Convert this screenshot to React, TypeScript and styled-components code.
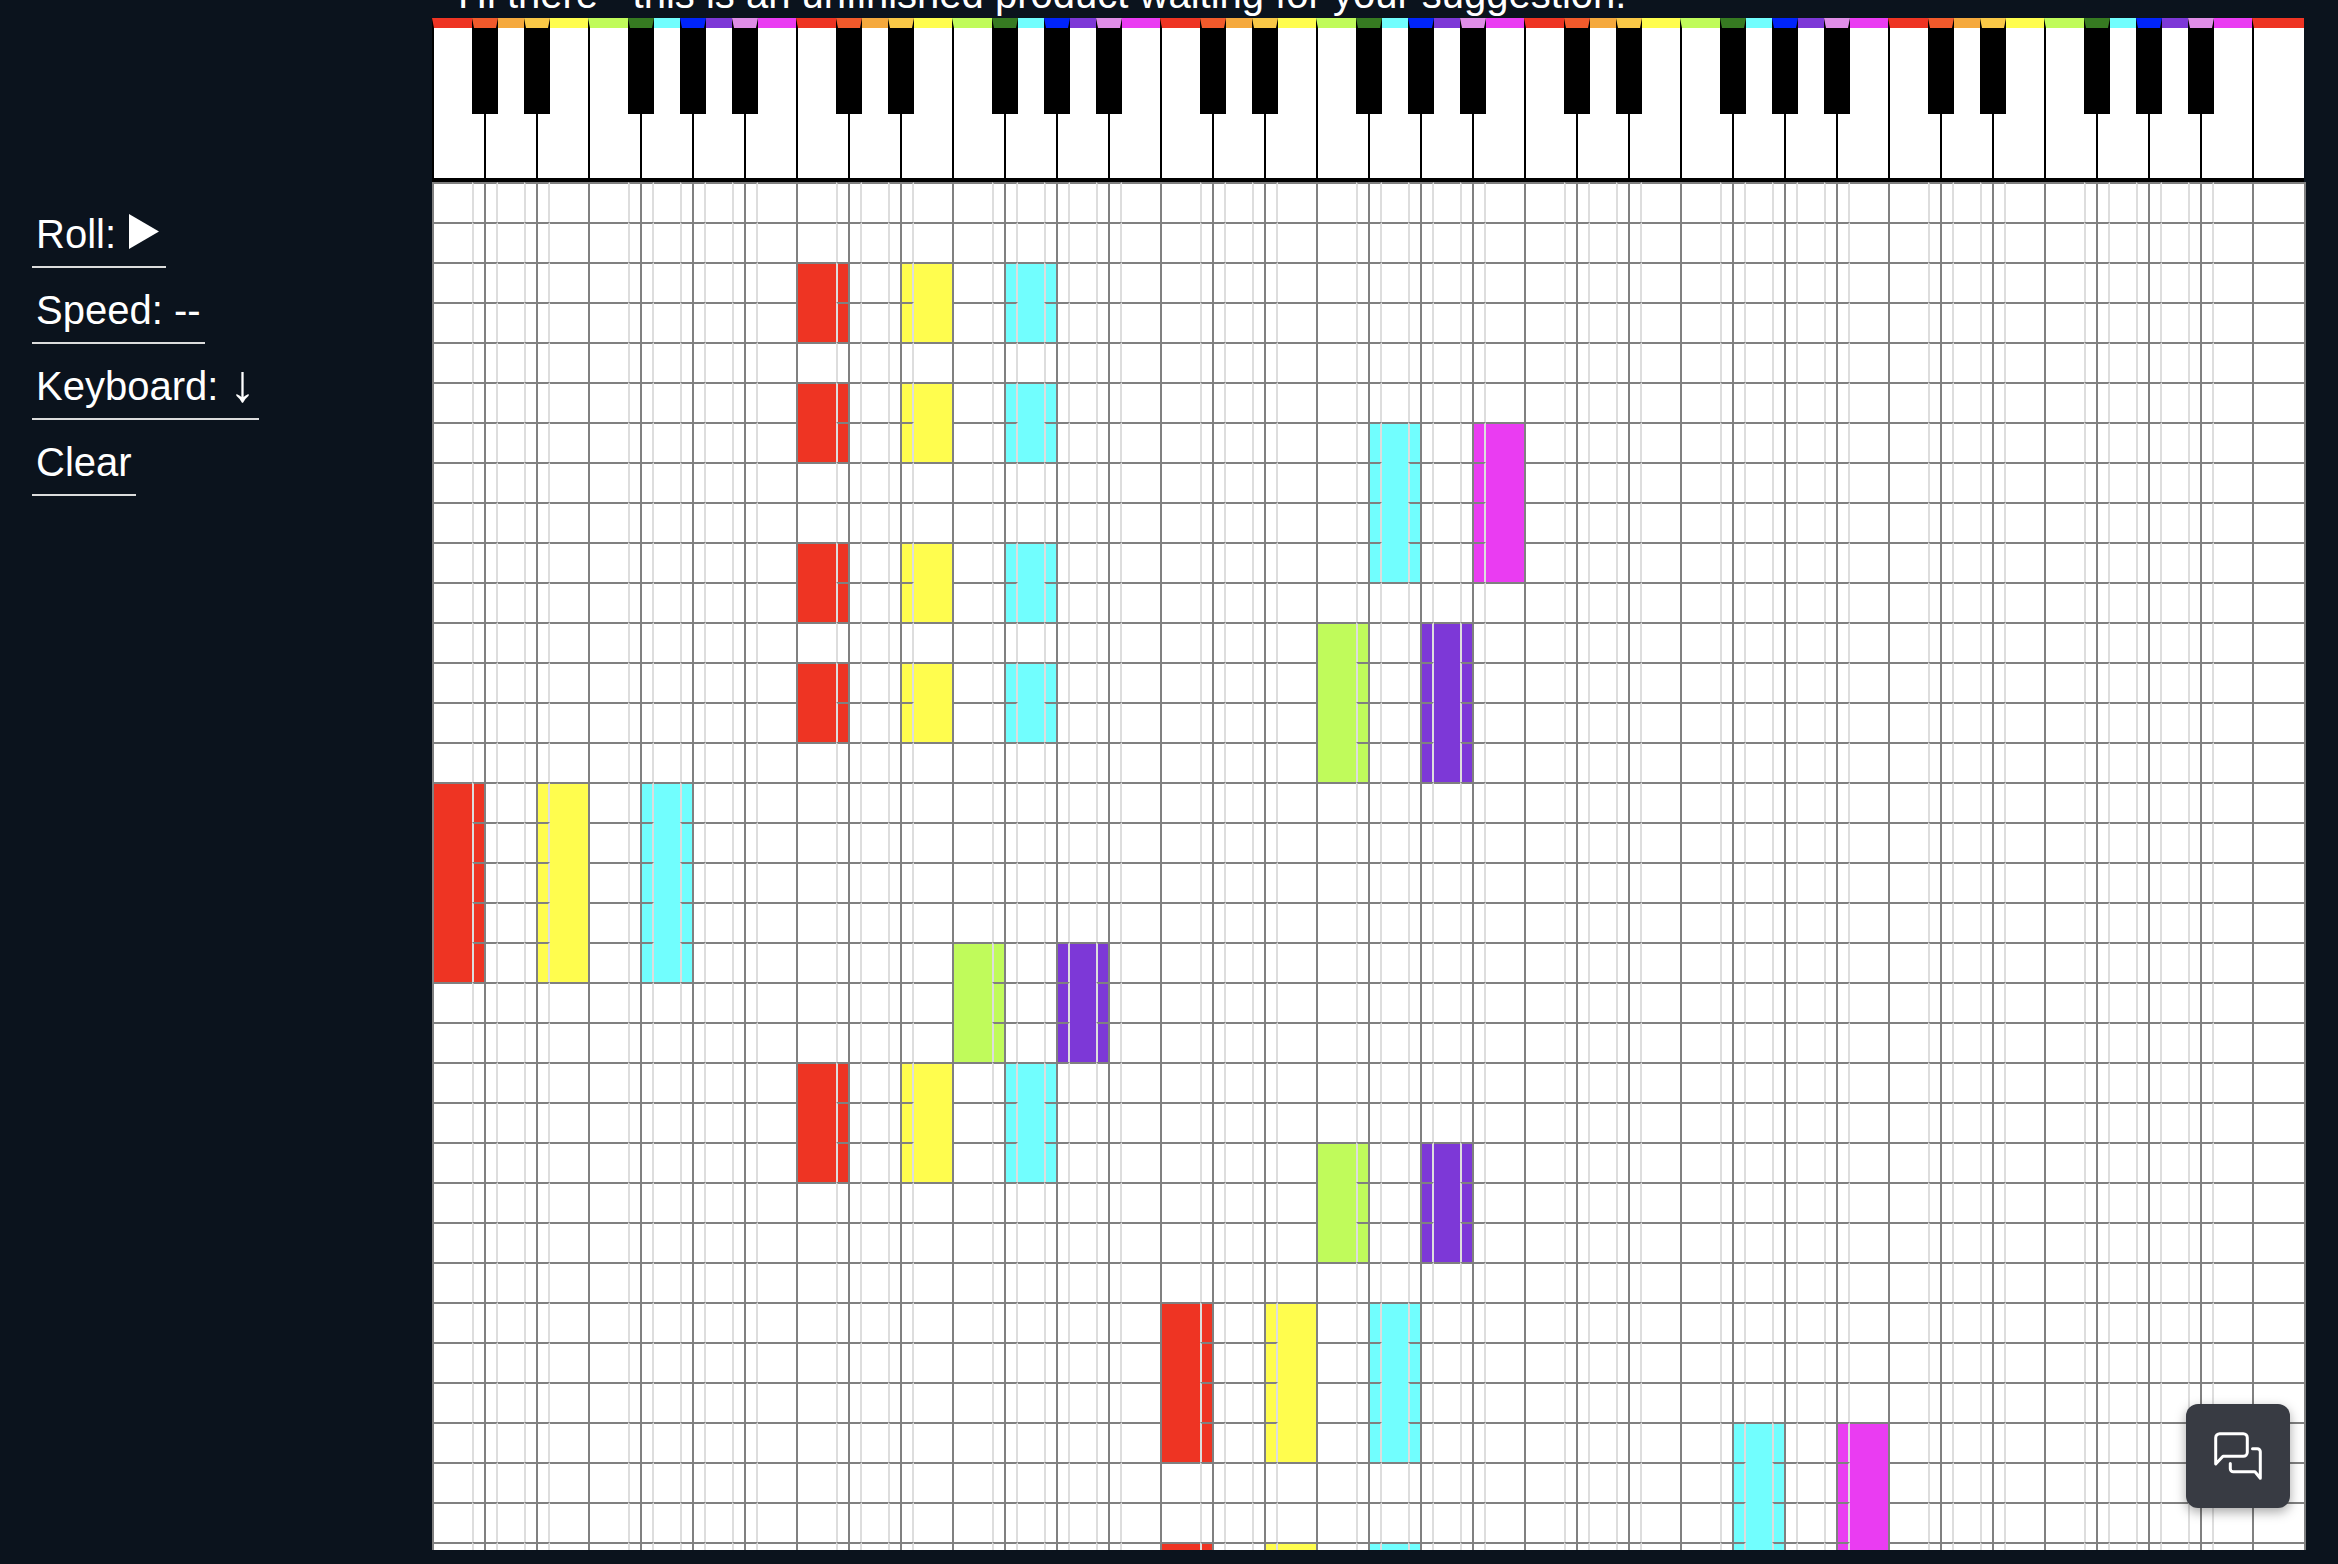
import React from "react";
import styled, { createGlobalStyle } from "styled-components";

const ROWS = 35;
const WHITE_KEYS = 36;

// colours per semitone, c through b
const whiteColors = ["#ee3423", "#f5a93d", "#fffd4e", "#c0fb5b", "#71fefe", "#7d38d7", "#ea3cf2"];
const blackColors: Record<number, string> = {
  1: "#f25a2b",
  2: "#f9c846",
  4: "#367a21",
  5: "#0024fa",
  6: "#df8de7",
};

interface Note {
  key: number;
  row: number;
  len: number;
}

const chord = (keys: number[], row: number, len: number): Note[] =>
  keys.map((key) => ({ key, row, len }));

const notes: Note[] = [
  ...chord([7, 9, 11], 2, 2),
  ...chord([7, 9, 11], 5, 2),
  ...chord([7, 9, 11], 9, 2),
  ...chord([7, 9, 11], 12, 2),
  ...chord([18, 20], 6, 4),
  ...chord([17, 19], 11, 4),
  ...chord([0, 2, 4], 15, 5),
  ...chord([10, 12], 19, 3),
  ...chord([7, 9, 11], 22, 3),
  ...chord([17, 19], 24, 3),
  ...chord([14, 16, 18], 28, 4),
  ...chord([25, 27], 31, 4),
  ...chord([14, 16, 18], 34, 4),
];

const GlobalStyle = createGlobalStyle`
  html, body {
    margin: 0;
    height: 100%;
    overflow: hidden;
    background: #0b131d;
  }
  * {
    box-sizing: border-box;
  }
`;

const Page = styled.div`
  display: flex;
  width: 2338px;
  height: 1564px;
  overflow: hidden;
  font-family: "Liberation Sans", Arial, sans-serif;
  color: #fff;
`;

const Sidebar = styled.nav`
  width: 432px;
  flex: none;
  display: flex;
  flex-direction: column;
  align-items: flex-start;
  gap: 19px;
  padding: 211px 0 0 32px;
`;

const MenuItem = styled.div`
  display: flex;
  padding: 0 4px 9px;
  border-bottom: 2px solid #dcdcdc;
  font-size: 40px;
  line-height: 46px;
  white-space: pre;
`;

const PlayIcon = styled.svg`
  width: 30px;
  height: 35px;
  margin: 3px 3px 0 2px;
`;

const ArrowGlyph = styled.span`
  width: 26px;
  font-size: 52px;
  margin-top: -3px;
`;

const Main = styled.main`
  flex: none;
  width: 1874px;
`;

const Title = styled.h1`
  margin: -15px 0 15px;
  height: 18px;
  padding-left: 26px;
  font-size: 40px;
  font-weight: 400;
  line-height: 18px;
  white-space: nowrap;
`;

const Piano = styled.div`
  display: flex;
  width: 1872px;
  border-bottom: 4px solid #000;
  height: 164px;
`;

const WhiteKey = styled.div<{ $color: string }>`
  position: relative;
  flex: none;
  width: 52px;
  height: 160px;
  background: #fff;
  border-top: 10px solid ${(p) => p.$color};
  border-left: 2px solid #000;
`;

const BlackKey = styled.div<{ $color: string }>`
  position: absolute;
  top: -10px;
  left: -14px;
  width: 26px;
  height: 96px;
  background: #000;
  border-top: 10px solid ${(p) => p.$color};
  border-left: 2px solid #000;
  border-right: 2px solid #000;
`;

const Roll = styled.div`
  display: flex;
  width: 1874px;
  height: 1368px;
  overflow: hidden;
  background: #fff;
  border-right: 2px solid #808080;
`;

const WhiteLane = styled.div`
  position: relative;
  flex: none;
  width: 52px;
  height: 100%;
  border-left: 2px solid #808080;
  background: repeating-linear-gradient(to bottom, #808080 0, #808080 2px, transparent 2px, transparent 40px);
`;

const BlackLane = styled.div`
  position: absolute;
  top: 0;
  left: -14px;
  width: 26px;
`;

const BlackCell = styled.div`
  height: 40px;
  border-top: 2px solid #808080;
  border-left: 2px solid #ddd;
  border-right: 2px solid #ddd;
`;

const NoteBlock = styled.div<{ $color: string }>`
  position: absolute;
  left: 0;
  width: 50px;
  background: ${(p) => p.$color};
`;

const ChatButton = styled.button`
  position: fixed;
  right: 48px;
  bottom: 56px;
  width: 104px;
  height: 104px;
  display: flex;
  align-items: center;
  justify-content: center;
  padding: 0;
  border: none;
  border-radius: 12px;
  background: #383b43;
  box-shadow: 0 4px 12px rgba(0, 0, 0, 0.35);
`;

const hasBlack = (k: number) => k > 0 && k % 7 in blackColors;

function ChatIcon() {
  return (
    <svg width="48" height="48" viewBox="0 0 48 48" fill="none" stroke="#fff" strokeWidth="3" strokeLinecap="round" strokeLinejoin="round" style={{ overflow: "visible" }}>
      <path d="M1.7 32V5.7a4 4 0 0 1 4-4h23.6a4 4 0 0 1 4 4v14.6a4 4 0 0 1-4 4H9z" />
      <path d="M38.5 16.7h4.8a3 3 0 0 1 3 3v26.6l-5.3-6.6H19.3a3 3 0 0 1-3-3v-5.1" />
    </svg>
  );
}

export default function App() {
  const keys = Array.from({ length: WHITE_KEYS }, (_, i) => i);
  const rows = Array.from({ length: ROWS }, (_, i) => i);

  return (
    <Page>
      <GlobalStyle />
      <Sidebar>
        <MenuItem>
          {"Roll: "}
          <PlayIcon viewBox="0 0 30 35">
            <polygon points="0,0 30,17.5 0,35" fill="#fff" />
          </PlayIcon>
        </MenuItem>
        <MenuItem>Speed: --</MenuItem>
        <MenuItem>
          {"Keyboard: "}
          <ArrowGlyph>↓</ArrowGlyph>
        </MenuItem>
        <MenuItem>Clear</MenuItem>
      </Sidebar>
      <Main>
        <Title>Hi there~ this is an unfinished product waiting for your suggestion.</Title>
        <Piano>
          {keys.map((k) => (
            <WhiteKey key={k} $color={whiteColors[k % 7]}>
              {hasBlack(k) && <BlackKey $color={blackColors[k % 7]} />}
            </WhiteKey>
          ))}
        </Piano>
        <Roll>
          {keys.map((k) => (
            <WhiteLane key={k}>
              {notes
                .filter((n) => n.key === k)
                .map((n) => (
                  <NoteBlock
                    key={n.row}
                    $color={whiteColors[k % 7]}
                    style={{ top: n.row * 40 + 2, height: n.len * 40 - 2 }}
                  />
                ))}
              {hasBlack(k) && (
                <BlackLane>
                  {rows.map((r) => (
                    <BlackCell key={r} />
                  ))}
                </BlackLane>
              )}
            </WhiteLane>
          ))}
        </Roll>
      </Main>
      <ChatButton>
        <ChatIcon />
      </ChatButton>
    </Page>
  );
}
